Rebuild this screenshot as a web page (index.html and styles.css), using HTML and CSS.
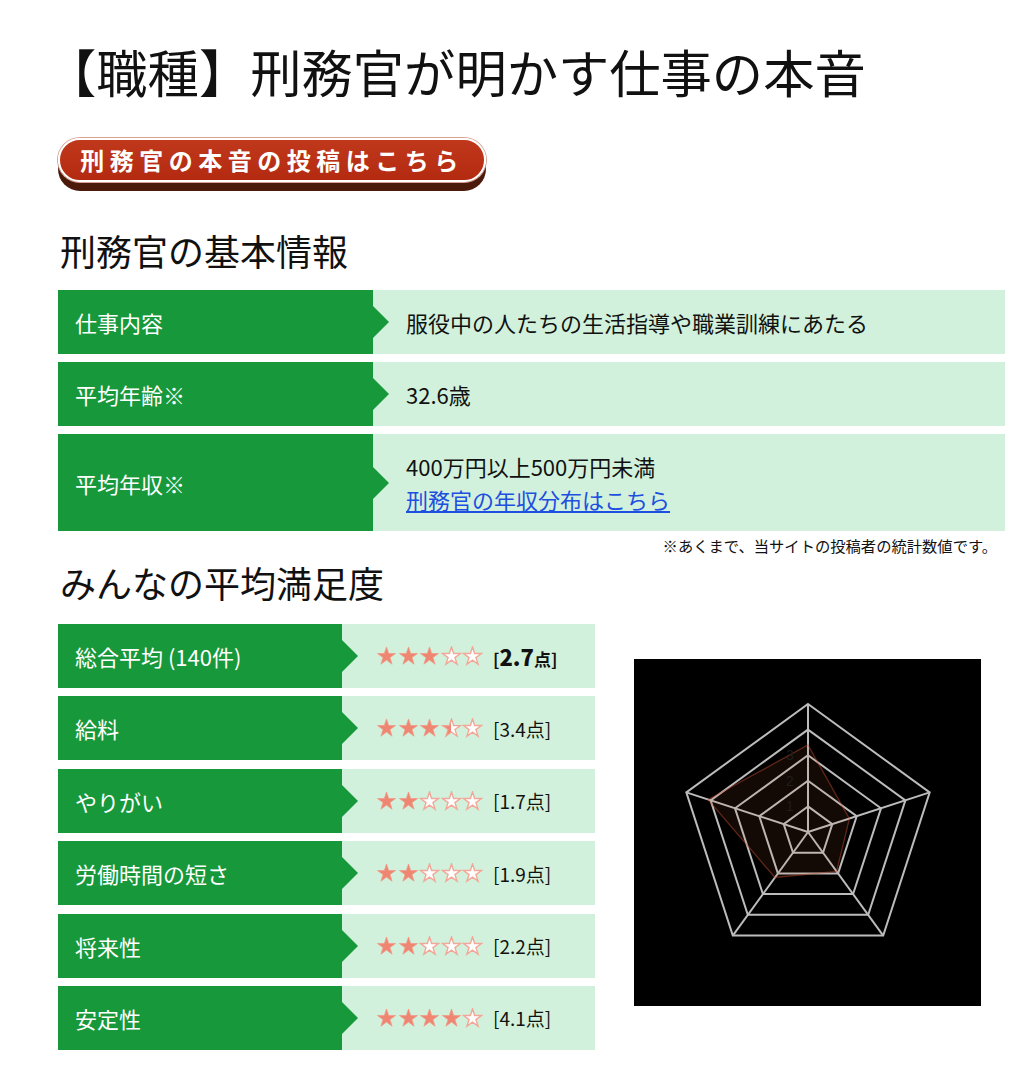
FILE: index.html
```html
<!DOCTYPE html>
<html lang="ja">
<head>
  <meta charset="utf-8">
  <title>【職種】刑務官が明かす仕事の本音</title>
  <link rel="stylesheet" href="styles.css">
</head>
<body>
  <svg class="defs" width="0" height="0" aria-hidden="true">
    <defs>
      <linearGradient id="half-fill" x1="0" x2="1" y1="0" y2="0">
        <stop offset="50%" stop-color="#ee8672"/>
        <stop offset="50%" stop-color="#fff"/>
      </linearGradient>
      <symbol id="s-full" viewBox="-1 -1 22 21">
        <path d="M10 0 L12.25 6.91 L19.51 6.91 L13.63 11.18 L15.88 18.09 L10 13.82 L4.12 18.09 L6.37 11.18 L0.49 6.91 L7.75 6.91 Z" fill="#ee8672" stroke="#f09a88" stroke-width="0.8"/>
      </symbol>
      <symbol id="s-half" viewBox="-1 -1 22 21">
        <path d="M10 0 L12.25 6.91 L19.51 6.91 L13.63 11.18 L15.88 18.09 L10 13.82 L4.12 18.09 L6.37 11.18 L0.49 6.91 L7.75 6.91 Z" fill="url(#half-fill)" stroke="#f2a292" stroke-width="1.3"/>
      </symbol>
      <symbol id="s-empty" viewBox="-1 -1 22 21">
        <path d="M10 0 L12.25 6.91 L19.51 6.91 L13.63 11.18 L15.88 18.09 L10 13.82 L4.12 18.09 L6.37 11.18 L0.49 6.91 L7.75 6.91 Z" fill="#fff" stroke="#f2a898" stroke-width="1.5"/>
      </symbol>
    </defs>
  </svg>

  <h1 class="page-title">【職種】刑務官が明かす仕事の本音</h1>

  <div class="content">
    <a class="post-btn" href="#">刑務官の本音の投稿はこちら</a>

    <h2 class="section-title">刑務官の基本情報</h2>
    <div class="info-table">
      <div class="info-row">
        <div class="info-label">仕事内容</div>
        <div class="info-value">服役中の人たちの生活指導や職業訓練にあたる</div>
      </div>
      <div class="info-row">
        <div class="info-label">平均年齢※</div>
        <div class="info-value">32.6歳</div>
      </div>
      <div class="info-row">
        <div class="info-label">平均年収※</div>
        <div class="info-value">
          400万円以上500万円未満<br>
          <a href="#">刑務官の年収分布はこちら</a>
        </div>
      </div>
    </div>
    <p class="note">※あくまで、当サイトの投稿者の統計数値です。</p>

    <h2 class="section-title section-title-2">みんなの平均満足度</h2>
    <div class="rating-wrap">
      <div class="rating-table">
        <div class="info-row rating-row">
          <div class="info-label">総合平均 (140件)</div>
          <div class="info-value">
            <span class="stars">
              <svg class="star"><use href="#s-full"/></svg><svg class="star"><use href="#s-full"/></svg><svg class="star"><use href="#s-full"/></svg><svg class="star"><use href="#s-empty"/></svg><svg class="star"><use href="#s-empty"/></svg>
            </span>
            <span class="score score-total">[<b class="num">2.7</b>点]</span>
          </div>
        </div>
        <div class="info-row rating-row">
          <div class="info-label">給料</div>
          <div class="info-value">
            <span class="stars">
              <svg class="star"><use href="#s-full"/></svg><svg class="star"><use href="#s-full"/></svg><svg class="star"><use href="#s-full"/></svg><svg class="star"><use href="#s-half"/></svg><svg class="star"><use href="#s-empty"/></svg>
            </span>
            <span class="score">[3.4点]</span>
          </div>
        </div>
        <div class="info-row rating-row">
          <div class="info-label">やりがい</div>
          <div class="info-value">
            <span class="stars">
              <svg class="star"><use href="#s-full"/></svg><svg class="star"><use href="#s-full"/></svg><svg class="star"><use href="#s-empty"/></svg><svg class="star"><use href="#s-empty"/></svg><svg class="star"><use href="#s-empty"/></svg>
            </span>
            <span class="score">[1.7点]</span>
          </div>
        </div>
        <div class="info-row rating-row">
          <div class="info-label">労働時間の短さ</div>
          <div class="info-value">
            <span class="stars">
              <svg class="star"><use href="#s-full"/></svg><svg class="star"><use href="#s-full"/></svg><svg class="star"><use href="#s-empty"/></svg><svg class="star"><use href="#s-empty"/></svg><svg class="star"><use href="#s-empty"/></svg>
            </span>
            <span class="score">[1.9点]</span>
          </div>
        </div>
        <div class="info-row rating-row">
          <div class="info-label">将来性</div>
          <div class="info-value">
            <span class="stars">
              <svg class="star"><use href="#s-full"/></svg><svg class="star"><use href="#s-full"/></svg><svg class="star"><use href="#s-empty"/></svg><svg class="star"><use href="#s-empty"/></svg><svg class="star"><use href="#s-empty"/></svg>
            </span>
            <span class="score">[2.2点]</span>
          </div>
        </div>
        <div class="info-row rating-row">
          <div class="info-label">安定性</div>
          <div class="info-value">
            <span class="stars">
              <svg class="star"><use href="#s-full"/></svg><svg class="star"><use href="#s-full"/></svg><svg class="star"><use href="#s-full"/></svg><svg class="star"><use href="#s-full"/></svg><svg class="star"><use href="#s-empty"/></svg>
            </span>
            <span class="score">[4.1点]</span>
          </div>
        </div>
      </div>

      <div class="radar">
        <svg width="347" height="347" viewBox="0 0 347 347">
          <!-- grid: 5 levels, 25.6px per point -->
          <g fill="none" stroke="#bcbcbc" stroke-width="2">
            <polygon points="174,45 295.7,133.4 249.2,276.6 98.8,276.6 52.3,133.4"/>
            <polygon points="174,70.6 271.4,141.4 234.2,255.8 113.8,255.8 76.6,141.4"/>
            <polygon points="174,96.2 247,149.3 219.1,235.1 128.9,235.1 101,149.3"/>
            <polygon points="174,121.8 222.7,157.2 204.1,214.4 143.9,214.4 125.3,157.2"/>
            <polygon points="174,147.4 198.3,165.1 189,193.7 159,193.7 149.7,165.1"/>
            <line x1="174" y1="173" x2="174" y2="45"/>
            <line x1="174" y1="173" x2="295.7" y2="133.4"/>
            <line x1="174" y1="173" x2="249.2" y2="276.6"/>
            <line x1="174" y1="173" x2="98.8" y2="276.6"/>
            <line x1="174" y1="173" x2="52.3" y2="133.4"/>
          </g>
          <polygon points="174,86 215.4,159.6 202.6,212.3 140.9,218.5 74.1,140.6" fill="rgba(210,100,60,0.09)" stroke="rgba(200,80,50,0.45)" stroke-width="1.3"/>
          <g class="radar-tick" font-size="14" fill="#1e1e1e">
            <text x="152" y="152">1</text>
            <text x="152" y="127">2</text>
            <text x="152" y="101">3</text>
          </g>
        </svg>
      </div>
    </div>
  </div>
</body>
</html>
```

FILE: styles.css
```css
body {
  margin: 0;
  font-family: "Noto Sans CJK JP", sans-serif;
  color: #111;
  background: #fff;
}

.defs {
  position: absolute;
}

.page-title {
  margin: 0;
  padding: 41px 0 0 45px;
  font-size: 51.3px;
  font-weight: 400;
  line-height: 60px;
}

.content {
  padding-left: 58px;
  width: 947px;
}

.post-btn {
  display: block;
  box-sizing: border-box;
  width: 428px;
  height: 44px;
  margin-top: 37px;
  border: 2px solid #fff;
  border-radius: 22px;
  background: linear-gradient(#c0381c, #b32a10);
  box-shadow: 0 0 0 1px #d9a393, 0 9px 0 #4b1a0b;
  color: #fff;
  font-size: 24px;
  font-weight: 700;
  letter-spacing: 5.5px;
  line-height: 40px;
  text-align: center;
  text-decoration: none;
}

.section-title {
  margin: 46px 0 18px 2px;
  font-size: 36px;
  font-weight: 400;
  line-height: 44px;
}

.section-title-2 {
  margin-top: 5px;
  margin-bottom: 20px;
}

.info-table {
  display: flex;
  flex-direction: column;
  gap: 8px;
}

.info-row {
  display: flex;
  min-height: 64px;
  font-size: 22px;
}

.info-label {
  position: relative;
  display: flex;
  align-items: center;
  box-sizing: border-box;
  width: 315px;
  flex-shrink: 0;
  padding-left: 17px;
  background: #17983b;
  color: #fff;
}

.info-label::after {
  content: "";
  position: absolute;
  left: 100%;
  top: 50%;
  margin-top: -16px;
  border-left: 16px solid #17983b;
  border-top: 16px solid transparent;
  border-bottom: 16px solid transparent;
}

.info-value {
  flex: 1;
  display: flex;
  flex-direction: column;
  justify-content: center;
  padding: 15.5px 0 15.5px 33px;
  background: #d2f1dc;
  line-height: 33px;
}

.info-value a {
  color: #1d4fe0;
}

.note {
  margin: 4px 8px 0 0;
  font-size: 15.3px;
  line-height: 20px;
  text-align: right;
}

.rating-wrap {
  display: flex;
  gap: 39px;
}

.rating-table {
  display: flex;
  flex-direction: column;
  gap: 8.4px;
  width: 537px;
}

.rating-row {
  min-height: 64px;
}

.rating-row .info-label {
  width: 284px;
}

.rating-row .info-value {
  flex-direction: row;
  align-items: center;
  justify-content: flex-start;
  padding: 0 0 0 34px;
}

.stars {
  display: flex;
  gap: 0.5px;
}

.star {
  width: 21px;
  height: 20px;
}

.score {
  margin-left: 10px;
  font-size: 19px;
  line-height: 1;
}

.score-total {
  font-weight: 700;
  font-size: 17px;
}

.score-total .num {
  font-size: 22px;
}

.radar {
  margin-top: 35px;
  width: 347px;
  height: 347px;
  background: #000;
}

.radar svg {
  display: block;
}

.radar-tick {
  font-family: "Liberation Sans", sans-serif;
}
```
